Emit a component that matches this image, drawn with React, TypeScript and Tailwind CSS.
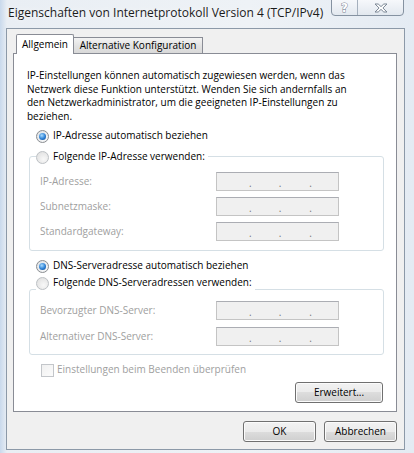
import React from 'react';

const font = "font-['Open_Sans',sans-serif]";

function Radio({ checked, disabled }: { checked?: boolean; disabled?: boolean }) {
  return (
    <span
      className={`w-[13px] h-[13px] shrink-0 rounded-full border flex items-center justify-center ${
        disabled
          ? 'border-[#bcc0c4] bg-[radial-gradient(circle_at_60%_65%,#f8f8f8,#dcdcdc)]'
          : 'border-[#8a8d91] bg-[radial-gradient(circle_at_60%_65%,#ffffff,#d8dce0)]'
      }`}
    >
      {checked && (
        <span className="w-[7px] h-[7px] rounded-full bg-[radial-gradient(circle_at_40%_35%,#a9dcff,#2a7fd4_55%,#0e3f80)]" />
      )}
    </span>
  );
}

function RadioRow({ label, checked, disabled }: { label: string; checked?: boolean; disabled?: boolean }) {
  return (
    <div className="flex items-center gap-[4px] h-[16px]">
      <Radio checked={checked} disabled={disabled} />
      <span className="text-black whitespace-nowrap">{label}</span>
    </div>
  );
}

function IpField({ label }: { label: string }) {
  return (
    <div className="flex items-center h-[19px]">
      <span className="w-[176px] text-[#a0a0a0] whitespace-nowrap">{label}</span>
      <div className="w-[123px] h-[19px] border border-[#c4c4c4] border-t-[#abadb3] bg-[#f0f0f0] flex items-end pb-[2px] text-[#777] leading-none text-[10px]">
        <span className="ml-[32px]">.</span>
        <span className="ml-[27px]">.</span>
        <span className="ml-[28px]">.</span>
      </div>
    </div>
  );
}

function Button({ label, width }: { label: string; width: string }) {
  return (
    <div
      className={`${width} h-[21px] rounded-[3px] border border-[#707070] shadow-[inset_0_0_0_1px_#fbfbfb] bg-[linear-gradient(#f2f2f2_0%,#ebebeb_50%,#dddddd_50%,#cfcfcf_100%)] flex items-center justify-center text-black`}
    >
      {label}
    </div>
  );
}

export default function App() {
  return (
    <div
      className={`${font} w-[414px] h-[453px] overflow-hidden text-[10px] leading-[13.5px] bg-[linear-gradient(90deg,#c9d9ec_0px,#e9eef4_7px,#eef2f6_60%,#e4ebf3_100%)]`}
    >
      {/* title bar */}
      <div className="h-[28px] flex items-start justify-between pl-[8px] pr-[10px]">
        <span className="mt-[5px] text-[12px] leading-[16px] text-[#1b1b1b] whitespace-nowrap [text-shadow:0_0_6px_#ffffff]">
          Eigenschaften von Internetprotokoll Version 4 (TCP/IPv4)
        </span>
        <div className="shrink-0 flex -mt-px h-[17px] border border-[#8592a1] rounded-b-[4px] overflow-hidden bg-[linear-gradient(#f6f8fb,#e2e8ef)]">
          <div className="w-[26px] flex items-center justify-center border-r border-[#a5b0bd]">
            <span className="text-[12px] font-bold leading-none text-white [-webkit-text-stroke:1px_#7b8795] [paint-order:stroke_fill] font-['DejaVu_Sans',sans-serif]">
              ?
            </span>
          </div>
          <div className="w-[45px] flex items-center justify-center">
            <svg width="14" height="10" viewBox="0 0 14 10">
              <path
                d="M1 1 L4.2 1 L7 3.6 L9.8 1 L13 1 L8.9 5 L13 9 L9.8 9 L7 6.4 L4.2 9 L1 9 L5.1 5 Z"
                fill="#ffffff"
                stroke="#7b8795"
                strokeWidth="1"
                strokeLinejoin="round"
              />
            </svg>
          </div>
        </div>
      </div>

      {/* client area */}
      <div className="ml-[6px] w-[399px] h-[422px] border border-[#8c99a8] bg-[#f0f0f0] pt-[5px] pl-[6px] pr-[7px]">
        {/* tabs */}
        <div className="flex items-end pl-[3px]">
          <div className="relative z-10 w-[58px] h-[20px] -mb-px pt-[3px] text-center bg-white border border-b-0 border-[#898c95] rounded-t-[2px] text-black">
            Allgemein
          </div>
          <div className="w-[130px] h-[16px] -ml-px pt-[1px] text-center border border-b-0 border-[#898c95] bg-[linear-gradient(#f3f3f3,#e3e3e3_50%,#d9d9d9)] text-black">
            Alternative Konfiguration
          </div>
        </div>

        {/* tab panel */}
        <div className="h-[359px] border border-[#898c95] bg-white pt-[15px] pl-[13px] pr-[12px]">
          <p className="whitespace-nowrap text-black">
            IP-Einstellungen können automatisch zugewiesen werden, wenn das
            <br />
            Netzwerk diese Funktion unterstützt. Wenden Sie sich andernfalls an
            <br />
            den Netzwerkadministrator, um die geeigneten IP-Einstellungen zu
            <br />
            beziehen.
          </p>

          <div className="mt-[5px] ml-[9px]">
            <RadioRow label="IP-Adresse automatisch beziehen" checked />
          </div>

          <div className="mt-[12px] ml-[2px] border border-[#d5dfe5] rounded-[3px] pl-[10px] pb-[9px]">
            <div className="-mt-[8px] -ml-[4px] w-fit bg-white pr-[3px]">
              <RadioRow label="Folgende IP-Adresse verwenden:" disabled />
            </div>
            <div className="mt-[7px] flex flex-col gap-[6px]">
              <IpField label="IP-Adresse:" />
              <IpField label="Subnetzmaske:" />
              <IpField label="Standardgateway:" />
            </div>
          </div>

          <div className="mt-[7px] ml-[9px]">
            <RadioRow label="DNS-Serveradresse automatisch beziehen" checked />
          </div>

          <div className="mt-[15px] ml-[2px] border border-[#d5dfe5] rounded-[3px] pl-[10px] pb-[8px]">
            <div className="-mt-[15px] -ml-[4px] w-fit bg-white pr-[3px]">
              <RadioRow label="Folgende DNS-Serveradressen verwenden:" disabled />
            </div>
            <div className="mt-[10px] flex flex-col gap-[7px]">
              <IpField label="Bevorzugter DNS-Server:" />
              <IpField label="Alternativer DNS-Server:" />
            </div>
          </div>

          <div className="mt-[7px] ml-[14px] flex items-center gap-[3px] h-[16px]">
            <span className="w-[13px] h-[13px] border border-[#c3c6ca] bg-[linear-gradient(135deg,#f0f0f0,#fbfbfb)]" />
            <span className="text-[#a0a0a0] whitespace-nowrap">Einstellungen beim Beenden überprüfen</span>
          </div>

          <div className="mt-[4px] flex justify-end pr-[1px]">
            <Button label="Erweitert..." width="w-[88px]" />
          </div>
        </div>

        {/* footer */}
        <div className="mt-[9px] flex justify-end gap-[8px]">
          <Button label="OK" width="w-[73px]" />
          <Button label="Abbrechen" width="w-[73px]" />
        </div>
      </div>
    </div>
  );
}
